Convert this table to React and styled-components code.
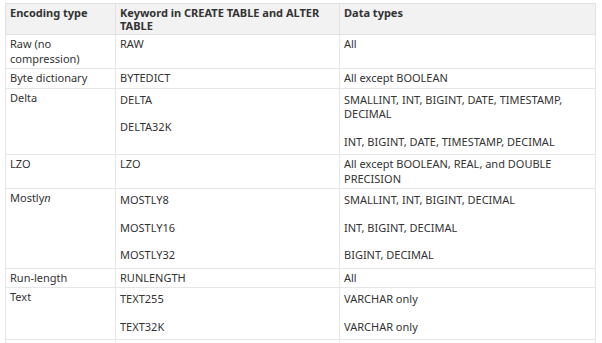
import React from "react";
import styled, { createGlobalStyle } from "styled-components";

const Global = createGlobalStyle`
  html, body { margin: 0; padding: 0; background: #fff; overflow: hidden; }
  body { font-family: "Noto Sans", "Open Sans", sans-serif; }
`;

const Page = styled.div`
  padding: 3px 7px 0 5px;
  width: 602px;
  height: 343px;
  box-sizing: border-box;
  overflow: hidden;
`;

const Table = styled.table`
  width: 590px;
  table-layout: fixed;
  border-collapse: collapse;
  font-size: 11px;
  line-height: 14.5px;
  color: #333;
`;

const Th = styled.th`
  background: #f2f2f2;
  border: 1px solid #e1e1e1;
  padding: 2px 4px;
  text-align: left;
  vertical-align: top;
  font-weight: 700;
  line-height: 13px;
`;

const Td = styled.td`
  border: 1px solid #e6e6e6;
  padding: 2px 4px;
  text-align: left;
  vertical-align: top;
  height: ${(p) => p.$h || "auto"};
`;

const P = styled.p`
  margin: 2px 0 3px;
  & + & { margin-top: ${(p) => p.$gap}px; }
`;

const rows = [
  { name: "Raw (no compression)", kw: ["RAW"], types: ["All"] },
  { name: "Byte dictionary", kw: ["BYTEDICT"], types: ["All except BOOLEAN"] },
  {
    name: "Delta",
    kw: ["DELTA", "DELTA32K"],
    kwGap: 11.5,
    types: ["SMALLINT, INT, BIGINT, DATE, TIMESTAMP, DECIMAL", "INT, BIGINT, DATE, TIMESTAMP, DECIMAL"],
    typesGap: 15,
  },
  { name: "LZO", kw: ["LZO"], types: ["All except BOOLEAN, REAL, and DOUBLE PRECISION"] },
  {
    name: (
      <>
        Mostly<i>n</i>
      </>
    ),
    kw: ["MOSTLY8", "MOSTLY16", "MOSTLY32"],
    types: ["SMALLINT, INT, BIGINT, DECIMAL", "INT, BIGINT, DECIMAL", "BIGINT, DECIMAL"],
  },
  { name: "Run-length", kw: ["RUNLENGTH"], types: ["All"] },
  { name: "Text", kw: ["TEXT255", "TEXT32K"], types: ["VARCHAR only", "VARCHAR only"] },
];

const Cell = ({ items, gap = 13 }) =>
  items.length > 1 ? (
    <Td>
      {items.map((t, i) => (
        <P key={i} $gap={gap}>
          {t}
        </P>
      ))}
    </Td>
  ) : (
    <Td>{items[0]}</Td>
  );

export default function App() {
  return (
    <Page>
      <Global />
      <Table>
        <colgroup>
          <col style={{ width: 110 }} />
          <col style={{ width: 224 }} />
          <col style={{ width: 256 }} />
        </colgroup>
        <thead>
          <tr>
            <Th>Encoding type</Th>
            <Th>Keyword in CREATE TABLE and ALTER TABLE</Th>
            <Th>Data types</Th>
          </tr>
        </thead>
        <tbody>
          {rows.map((r, i) => (
            <tr key={i}>
              <Td>{r.name}</Td>
              <Cell items={r.kw} gap={r.kwGap} />
              <Cell items={r.types} gap={r.typesGap} />
            </tr>
          ))}
          <tr>
            <Td $h="40px" />
            <Td />
            <Td />
          </tr>
        </tbody>
      </Table>
    </Page>
  );
}
